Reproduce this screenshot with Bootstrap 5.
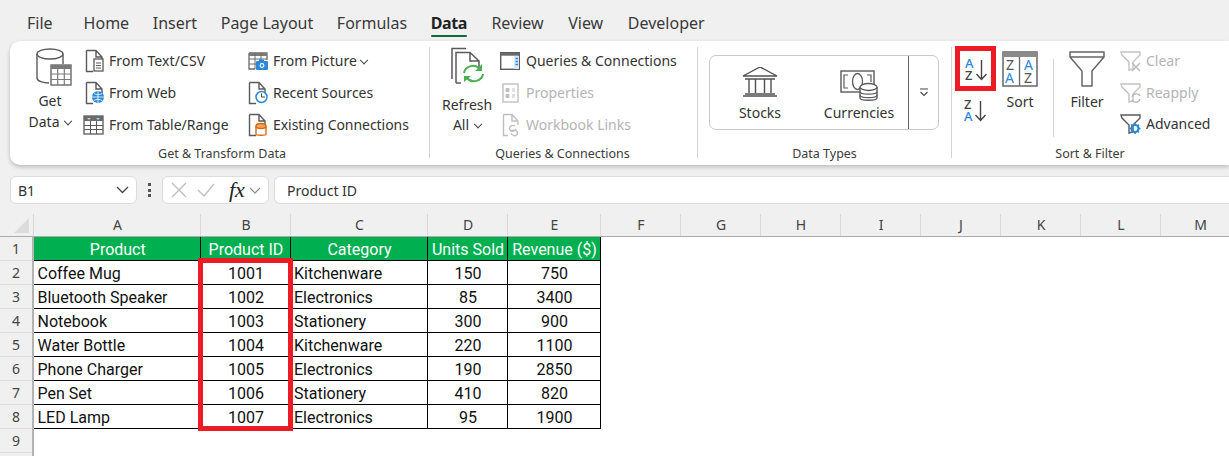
<!DOCTYPE html>
<html lang="en">
<head>
<meta charset="utf-8">
<title>Excel Data tab</title>
<link href="https://cdn.jsdelivr.net/npm/bootstrap@5.3.0/dist/css/bootstrap.min.css" rel="stylesheet">
<style>
html,body{width:1229px;height:456px;overflow:hidden;}
body{background:#f0f0f0;color:#333;font-family:"Noto Sans","Open Sans",sans-serif;font-size:14px;}
.tabbar{height:41px;padding-left:27px;font-size:16px;color:#3a3a3a;}
.tabitem{position:relative;padding-top:11px;line-height:24px;margin-right:23.600px;white-space:nowrap;}
.tabitem.first{margin-right:31px;}
.tabitem.on{font-weight:700;color:#222;letter-spacing:-.4px;margin-right:24.500px;}
.tabitem.wide{margin-right:24.600px;}
.tabitem.on::after{content:"";position:absolute;left:0;right:0;top:35px;height:2px;background:#0e6b3c;border-radius:1px;}
.ribbonbox{margin-left:10px;height:124px;background:#fff;border-radius:10px 0 0 10px;box-shadow:0 2px 4px rgba(0,0,0,.22);}
.grp{height:124px;flex:none;position:relative;}
.g1{width:420px;}.g2{width:268px;}.g3{width:254px;}.g4{width:277px;}
.grpbody{height:104px;padding-top:4px;}
.grpsep{border-right:1px solid #d4d4d4;position:absolute;right:0;top:6px;height:111px;}
.grplabel{font-size:12.500px;line-height:16px;text-align:center;color:#3c3c3c;white-space:nowrap;padding-top:1px;}
.sm{height:32px;display:flex;align-items:center;white-space:nowrap;line-height:32px;}
.sm svg{flex:none;}
.sm.off{color:#b4b4b4;}
.big{text-align:center;line-height:21px;flex:none;white-space:nowrap;}
.big svg{display:block;margin:0 auto;}
.chev{display:inline-block;width:6px;height:6px;border-right:1.200px solid #444;border-bottom:1.200px solid #444;transform:rotate(45deg) translate(-2px,-2px);margin-left:6px;transform-origin:center;}
.fbar{height:28px;margin-top:11px;margin-left:10px;font-size:14px;}
.fbox{background:#fff;border:1px solid #dcdcdc;border-radius:6px;height:28px;display:flex;align-items:center;flex:none;}
.namebox{width:127px;padding:0 7px;justify-content:space-between;}
.dotsgrip{width:25px;flex:none;display:flex;flex-direction:column;align-items:center;justify-content:center;gap:2.500px;}
.dotsgrip i{display:block;width:3px;height:3px;background:#555;}
.fxbox{width:107px;padding-left:7px;margin-right:5px;}
.fxmark{font-family:"Liberation Serif",serif;font-style:italic;font-weight:400;font-size:22px;color:#222;line-height:1;margin-left:13px;}
.formula{flex:1;border-radius:6px 0 0 6px;border-right:0;padding-left:12px;}
.sheetwrap{margin-top:10px;position:relative;height:242px;width:1229px;overflow:hidden;}
table.xl{table-layout:fixed;width:1239px;border-collapse:collapse;font-family:Roboto,"Noto Sans",sans-serif;font-size:16px;color:#111;}
table.xl th,table.xl td{padding:0;white-space:nowrap;overflow:hidden;}
.xl thead th{height:22px;background:#f0f0f0;font-weight:400;text-align:center;color:#444;font-family:"Noto Sans",sans-serif;font-size:14px;border-right:1px solid #d8d8d8;border-bottom:1px solid #ababab;line-height:20px;padding:1px 0 0 2px;}
.xl tbody th{height:24px;background:#f0f0f0;font-weight:400;text-align:center;color:#444;font-family:"Noto Sans",sans-serif;font-size:14px;border-right:2px solid #b4b4b4;border-bottom:1px solid #dcdcdc;}
.xl tbody td{height:24px;background:#fff;}
.xl td.cellb{border:1px solid #000;padding:3px 0 0 3.500px;line-height:20px;}
.xl td.ctr{text-align:center;padding-left:2px;}
.xl td.hd{background:#00b050;color:#fff;text-align:center;padding-left:2px;}
.corner{position:absolute;left:14px;top:4px;width:0;height:0;border-style:solid;border-width:0 0 15px 15px;border-color:transparent transparent #dcdcdc transparent;}
.redframe{position:absolute;border:5px solid #ed1c24;pointer-events:none;}
.rf-col{left:198px;top:44px;width:95px;height:173px;}
.sortbtn{width:41px;height:45px;border:5px solid #ed1c24;margin-left:3px;display:flex;align-items:center;justify-content:center;}
.dtypes{margin-left:11px;width:230px;height:75px;border:1px solid #c9c9c9;border-radius:7px;}
.dtdrop{width:30px;border-left:1px solid #666;display:flex;align-items:center;justify-content:center;flex:none;}
.dtbtn{text-align:center;padding-top:11px;line-height:21px;flex:none;}
.dtbtn svg{display:block;margin:0 auto 5px;}
.sortsep{width:1px;height:78px;background:#d4d4d4;margin-top:13px;flex:none;}
svg text{font-family:"Noto Sans",sans-serif;}
</style>
</head>
<body>
<svg width="0" height="0" class="d-block" style="position:absolute">
<defs>
<symbol id="pg" viewBox="0 0 20 24"><path d="M1.500 1.500H11L17 8V12M11 1.500V8H17M1.500 1.500V22.500H8" fill="none" stroke="#5a5a5a" stroke-width="1.400"/></symbol>
</defs>
</svg>

<nav class="tabbar d-flex">
<div class="tabitem first">File</div><div class="tabitem">Home</div><div class="tabitem">Insert</div><div class="tabitem">Page Layout</div><div class="tabitem">Formulas</div><div class="tabitem on">Data</div><div class="tabitem wide">Review</div><div class="tabitem wide">View</div><div class="tabitem">Developer</div>
</nav>

<section class="ribbonbox d-flex">
<!-- group 1 -->
<div class="grp g1">
<div class="grpbody d-flex">
<div class="big" style="width:46px;margin-left:17px;line-height:20.500px">
<svg width="38" height="42" viewBox="0 0 38 42" style="margin:2px 0 0 8px"><path d="M2 7V31C2 34 8 36 14 36M28 7V17" fill="none" stroke="#5a5a5a" stroke-width="1.400"/><ellipse cx="15" cy="7" rx="13" ry="5" fill="#fff" stroke="#5a5a5a" stroke-width="1.400"/><rect x="16" y="18" width="20" height="20" fill="#fff" stroke="#6a6a6a" stroke-width="1.400"/><rect x="16" y="18" width="20" height="4" fill="#7a7a7a"/><path d="M16 27H36M16 32.500H36M22.700 22V38M29.300 22V38" stroke="#7a7a7a" stroke-width="1.200"/></svg>
<div style="margin-top:2px">Get</div><div>Data<span class="chev"></span></div>
</div>
<div style="width:166px;margin-left:11px;">
<div class="sm"><svg width="20" height="24" viewBox="0 0 20 24" class="me-2" style="margin-left:1px"><use href="#pg"/><rect x="9" y="10" width="9" height="12" fill="#fff" stroke="#5a5a5a" stroke-width="1.300"/><path d="M11 14H16M11 16.500H16M11 19H16" stroke="#5a5a5a"/></svg><span style="margin-left:-4px;letter-spacing:.1px">From Text/CSV</span></div>
<div class="sm"><svg width="20" height="24" viewBox="0 0 20 24" class="me-2" style="margin-left:1px"><use href="#pg"/><circle cx="13" cy="16" r="6" fill="#2b88d8"/><path d="M7 16H19M13 10V22M9 12.500C11 14 15 14 17 12.500M9 19.500C11 18 15 18 17 19.500" stroke="#fff" stroke-width=".8" fill="none"/></svg><span style="margin-left:-4px">From Web</span></div>
<div class="sm"><svg width="21" height="20" viewBox="0 0 21 20" class="me-2" style="margin-left:-1px"><rect x="1" y="1" width="19" height="18" fill="#fff" stroke="#5a5a5a" stroke-width="1.300"/><rect x="1" y="1" width="19" height="5" fill="#6a6a6a"/><path d="M4 3H8L6 5ZM13 3H17L15 5Z" fill="#9fd0f5"/><path d="M1 10.500H20M1 14.500H20M7.500 6V19M13.500 6V19" stroke="#5a5a5a"/></svg><span style="margin-left:-3px">From Table/Range</span></div>
</div>
<div style="margin-left:-2px">
<div class="sm"><svg width="20" height="18" viewBox="0 0 20 18" class="me-2"><path d="M1 1H19V8M1 1V17H7" fill="none" stroke="#6a6a6a" stroke-width="1.300"/><rect x="1" y="1" width="18" height="3" fill="#7a7a7a"/><path d="M7 1V17M13 1V8M1 7H19M1 12H8" stroke="#6a6a6a"/><rect x="8" y="9" width="12" height="9" rx="1" fill="#2b88d8"/><rect x="11" y="7.500" width="5" height="2" fill="#2b88d8"/><circle cx="14" cy="13.500" r="2.400" fill="#fff"/><circle cx="14" cy="13.500" r="1.300" fill="#2b88d8"/></svg><span style="margin-left:-3px">From Picture<span class="chev" style="margin-left:4px"></span></span></div>
<div class="sm"><svg width="20" height="24" viewBox="0 0 20 24" class="me-2"><use href="#pg"/><circle cx="13.500" cy="16" r="5.500" fill="#fff" stroke="#2b88d8" stroke-width="1.500"/><path d="M13.500 12.500V16H17" fill="none" stroke="#444" stroke-width="1"/></svg><span style="margin-left:-3px">Recent Sources</span></div>
<div class="sm"><svg width="20" height="24" viewBox="0 0 20 24" class="me-2"><use href="#pg"/><path d="M8 13V21.500C8 22.500 18 22.500 18 21.500V13" fill="#fff" stroke="#d86a13" stroke-width="1.400"/><ellipse cx="13" cy="13" rx="5" ry="2.500" fill="#f2a55f" stroke="#d86a13" stroke-width="1.400"/></svg><span style="margin-left:-3px;letter-spacing:-.05px">Existing Connections</span></div>
</div>
</div>
<div class="grplabel" style="padding-left:4px">Get &amp; Transform Data</div>
<div class="grpsep"></div>
</div>
<!-- group 2 -->
<div class="grp g2">
<div class="grpbody d-flex">
<div class="big" style="width:50px;margin-left:12px;line-height:20px">
<svg width="38" height="42" viewBox="0 0 38 42" style="margin:2px 0 0 6px"><path d="M4 32V1.500H18M8 36V5.500H22L31 14V20M22 5.500V14H31M8 36H13" fill="none" stroke="#5a5a5a" stroke-width="1.500"/><path d="M16 26C17 19 27 16 32 22M35 27C34 34 24 37 19 31" fill="none" stroke="#4caf50" stroke-width="2"/><path d="M34 17V24H27ZM16 35V29H23Z" fill="#4caf50"/></svg>
<div style="margin-top:6px">Refresh</div><div>All<span class="chev"></span></div>
</div>
<div style="margin-left:8px;">
<div class="sm"><svg width="20" height="18" viewBox="0 0 20 18" class="me-2"><rect x=".7" y=".7" width="18.600" height="16.600" fill="#fff" stroke="#5a5a5a" stroke-width="1.400"/><rect x=".7" y=".7" width="18.600" height="3" fill="#6a6a6a"/><rect x="14" y="4" width="5" height="13" fill="#d5e9f9"/><path d="M15.500 6.500H18M15.500 9.500H18M15.500 12.500H18" stroke="#2b88d8" stroke-width="1.300"/></svg><span style="margin-left:-2px">Queries &amp; Connections</span></div>
<div class="sm off"><svg width="18" height="20" viewBox="0 0 18 20" class="me-2" style="margin-left:2px"><rect x="1" y="1" width="15" height="18" fill="#fff" stroke="#c0c0c0" stroke-width="1.400"/><path d="M4 5.500H7V8.500H4ZM4 11.500H7V14.500H4ZM10 6H13M10 8H13M10 12H13M10 14H13" fill="#c0c0c0" stroke="#c0c0c0"/></svg><span style="margin-left:-2px">Properties</span></div>
<div class="sm off"><svg width="18" height="24" viewBox="0 0 18 24" class="me-2" style="margin-left:2px"><path d="M1.500 1.500H10L16 8V12M10 1.500V8H16M1.500 1.500V22.500H6" fill="none" stroke="#c0c0c0" stroke-width="1.400"/><path d="M13 13C9 11 6 15 8.500 17.500C10 19 13 18 14 16M8 18C12 16 17 18 15 21.500C13.500 23.500 10 23 9 20" fill="none" stroke="#c0c0c0" stroke-width="1.400"/></svg><span style="margin-left:-2px">Workbook Links</span></div>
</div>
</div>
<div class="grplabel" style="margin-left:-3px">Queries &amp; Connections</div>
<div class="grpsep"></div>
</div>
<!-- group 3 -->
<div class="grp g3">
<div class="grpbody" style="padding-top:14px">
<div class="dtypes d-flex">
<div class="dtbtn" style="width:100px"><svg width="36" height="30" viewBox="0 0 36 30"><path d="M1 10L18 1L35 10ZM3 13H33M3 28H33M1 30H35M7 13V27M13.500 13V27M22.500 13V27M29 13V27" fill="none" stroke="#505050" stroke-width="1.400" transform="translate(0 -1)"/></svg>Stocks</div>
<div class="dtbtn" style="width:98px;padding-top:14px"><svg width="38" height="31" viewBox="0 0 38 31" style="margin-bottom:1px"><rect x="1" y="1" width="33" height="21" fill="#fff" stroke="#5a5a5a" stroke-width="1.400"/><path d="M8 5H4V18H8M27 5H31V12" fill="none" stroke="#5a5a5a" stroke-width="1.200"/><ellipse cx="17.500" cy="11.500" rx="5" ry="8" fill="none" stroke="#5a5a5a" stroke-width="1.300"/><path d="M20 17V28C20 31 37 31 37 28V17" fill="#fff" stroke="#5a5a5a" stroke-width="1.400"/><ellipse cx="28.500" cy="17" rx="8.500" ry="3.500" fill="#fff" stroke="#5a5a5a" stroke-width="1.400"/><path d="M20 21.500C20 25 37 25 37 21.500M20 25C20 28.500 37 28.500 37 25" fill="none" stroke="#5a5a5a" stroke-width="1.200"/></svg>Currencies</div>
<div class="dtdrop ms-auto"><svg width="10" height="9" viewBox="0 0 10 9"><path d="M1 1H9M1.500 4L5 7.500L8.500 4" fill="none" stroke="#444" stroke-width="1.100"/></svg></div>
</div>
</div>
<div class="grplabel" style="margin-left:-1px">Data Types</div>
<div class="grpsep"></div>
</div>
<!-- group 4 -->
<div class="grp g4">
<div class="grpbody d-flex" style="padding-top:5px">
<div style="width:44px;flex:none">
<div class="sortbtn"><svg width="22" height="24" viewBox="0 0 22 24" overflow="visible" style="margin-left:2px"><text x="-1" y="11" font-size="13" font-weight="500" fill="#2b88d8">A</text><text x="-1" y="22.500" font-size="13" font-weight="500" fill="#444">Z</text><path d="M15.500 3V22M10.500 17L15.500 22.500L20.500 17" fill="none" stroke="#444" stroke-width="1.400"/></svg></div>
<div class="d-flex justify-content-center ps-1" style="margin-top:7px"><svg width="22" height="24" viewBox="0 0 22 24" overflow="visible"><text x="-1" y="11" font-size="13" font-weight="500" fill="#444">Z</text><text x="-1" y="22.500" font-size="13" font-weight="500" fill="#2b88d8">A</text><path d="M15.500 3V22M10.500 17L15.500 22.500L20.500 17" fill="none" stroke="#444" stroke-width="1.400"/></svg></div>
</div>
<div class="big" style="width:36px;margin-left:6px;margin-top:5px">
<svg width="36" height="36" viewBox="0 0 36 36"><rect x="1" y="1" width="34" height="34" fill="#fff" stroke="#666" stroke-width="1.500"/><rect x="1" y="1" width="34" height="5" fill="#8a8a8a"/><path d="M17.500 6V35" stroke="#666" stroke-width="1.300"/><text x="4" y="19" font-size="14" fill="#555">Z</text><text x="3" y="32" font-size="14" fill="#2b88d8">A</text><text x="22" y="19" font-size="14" fill="#2b88d8">A</text><text x="22" y="32" font-size="14" fill="#555">Z</text></svg>
<div style="margin-top:4px">Sort</div>
</div>
<div class="sortsep" style="margin-left:15px"></div>
<div class="big" style="width:36px;margin-left:15px;margin-top:5px">
<svg width="36" height="36" viewBox="0 0 36 36"><path d="M1 1H35V6L23 20V35H13V20L1 6Z M1 6H35" fill="#fff" stroke="#666" stroke-width="1.500" stroke-linejoin="round"/></svg>
<div style="margin-top:4px">Filter</div>
</div>
<div style="margin-left:15px;margin-top:-1px">
<div class="sm off"><svg width="22" height="22" viewBox="0 0 22 22" class="me-1"><path d="M1 2H20V5L13 12V19L9 20V12L2 5Z" fill="#fff" stroke="#c4c4c4" stroke-width="1.400"/><path d="M12 13L20 21M20 13L12 21" stroke="#b8b8b8" stroke-width="1.300"/></svg>Clear</div>
<div class="sm off"><svg width="22" height="22" viewBox="0 0 22 22" class="me-1"><path d="M1 2H20V5L13 12V19L9 20V12L2 5Z" fill="#fff" stroke="#c4c4c4" stroke-width="1.400"/><path d="M12 15C13 11 19 11 20 14M20 17C19 21 13 21 12 18" fill="none" stroke="#b8b8b8" stroke-width="1.300"/></svg>Reapply</div>
<div class="sm" style="margin-top:-1px"><svg width="22" height="22" viewBox="0 0 22 22" class="me-1"><path d="M1 2H20V5L13 12V19L9 20V12L2 5Z" fill="#fff" stroke="#5a5a5a" stroke-width="1.400"/><circle cx="15" cy="15.500" r="3.500" fill="none" stroke="#2b88d8" stroke-width="2.200"/><path d="M15 10V12M15 19V21M9.500 15.500H11.500M18.500 15.500H20.500M11 11.500L12.500 13M17.500 18L19 19.500M19 11.500L17.500 13M12.500 18L11 19.500" stroke="#2b88d8" stroke-width="1.500"/></svg>Advanced</div>
</div>
</div>
<div class="grplabel" style="padding-left:13px;width:263px">Sort &amp; Filter</div>
</div>
</section>

<div class="fbar d-flex">
<div class="fbox namebox"><span>B1</span><svg width="13" height="8" viewBox="0 0 13 8"><path d="M1 1L6.500 6.500L12 1" fill="none" stroke="#444" stroke-width="1.300"/></svg></div>
<div class="dotsgrip"><i></i><i></i><i></i></div>
<div class="fbox fxbox"><svg width="18" height="18" viewBox="0 0 18 18"><path d="M2 2L16 16M16 2L2 16" stroke="#bdbdbd" stroke-width="1.300"/></svg><svg width="20" height="18" viewBox="0 0 20 18" class="ms-2"><path d="M2 9L8 15L18 3" fill="none" stroke="#bdbdbd" stroke-width="1.300"/></svg><span class="fxmark">fx</span><svg width="12" height="7" viewBox="0 0 12 7" class="ms-1"><path d="M1 1L6 6L11 1" fill="none" stroke="#888" stroke-width="1.100"/></svg></div>
<div class="fbox formula">Product ID</div>
</div>

<div class="sheetwrap">
<table class="xl">
<colgroup><col style="width:33px"><col style="width:167px"><col style="width:90px"><col style="width:137px"><col style="width:80px"><col style="width:93px"><col style="width:80px"><col style="width:80px"><col style="width:80px"><col style="width:80px"><col style="width:80px"><col style="width:80px"><col style="width:80px"><col style="width:79px"></colgroup>
<thead><tr><th></th><th>A</th><th>B</th><th>C</th><th>D</th><th>E</th><th>F</th><th>G</th><th>H</th><th>I</th><th>J</th><th>K</th><th>L</th><th>M</th></tr></thead>
<tbody>
<tr><th>1</th><td class="cellb hd">Product</td><td class="cellb hd">Product ID</td><td class="cellb hd">Category</td><td class="cellb hd">Units Sold</td><td class="cellb hd">Revenue ($)</td><td colspan="8"></td></tr>
<tr><th>2</th><td class="cellb">Coffee Mug</td><td class="cellb ctr">1001</td><td class="cellb">Kitchenware</td><td class="cellb ctr">150</td><td class="cellb ctr">750</td><td colspan="8"></td></tr>
<tr><th>3</th><td class="cellb">Bluetooth Speaker</td><td class="cellb ctr">1002</td><td class="cellb">Electronics</td><td class="cellb ctr">85</td><td class="cellb ctr">3400</td><td colspan="8"></td></tr>
<tr><th>4</th><td class="cellb">Notebook</td><td class="cellb ctr">1003</td><td class="cellb">Stationery</td><td class="cellb ctr">300</td><td class="cellb ctr">900</td><td colspan="8"></td></tr>
<tr><th>5</th><td class="cellb">Water Bottle</td><td class="cellb ctr">1004</td><td class="cellb">Kitchenware</td><td class="cellb ctr">220</td><td class="cellb ctr">1100</td><td colspan="8"></td></tr>
<tr><th>6</th><td class="cellb">Phone Charger</td><td class="cellb ctr">1005</td><td class="cellb">Electronics</td><td class="cellb ctr">190</td><td class="cellb ctr">2850</td><td colspan="8"></td></tr>
<tr><th>7</th><td class="cellb">Pen Set</td><td class="cellb ctr">1006</td><td class="cellb">Stationery</td><td class="cellb ctr">410</td><td class="cellb ctr">820</td><td colspan="8"></td></tr>
<tr><th>8</th><td class="cellb">LED Lamp</td><td class="cellb ctr">1007</td><td class="cellb">Electronics</td><td class="cellb ctr">95</td><td class="cellb ctr">1900</td><td colspan="8"></td></tr>
<tr><th>9</th><td colspan="5"></td><td colspan="8"></td></tr>
<tr><th></th><td colspan="5"></td><td colspan="8"></td></tr>
</tbody>
</table>
<div class="corner"></div>
<div class="redframe rf-col"></div>
</div>
<script src="https://cdn.jsdelivr.net/npm/bootstrap@5.3.0/dist/js/bootstrap.bundle.min.js"></script>
</body>
</html>
